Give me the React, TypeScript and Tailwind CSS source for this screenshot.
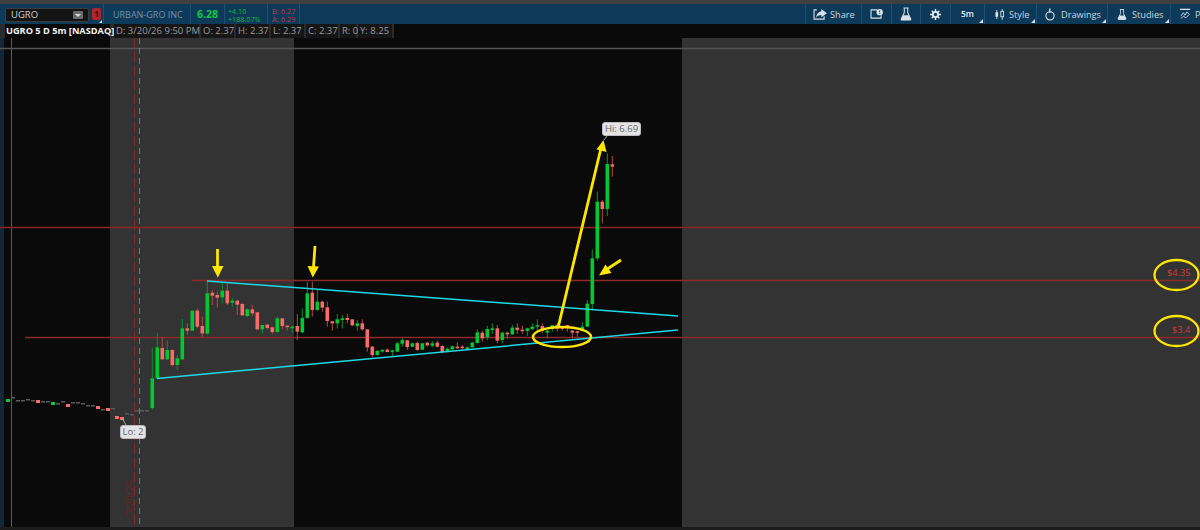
import React from 'react';

// candle = [wick top, wick bottom, body top, body bottom, 'g' | 'r'], in page px
type Candle = [number, number, number, number, 'g' | 'r'];

const CHART_TOP = 38;

// first stretch, values read off the crop at y offset 240
const sessionA: Candle[] = (
  [
    [325, 510, 415, 504, 'g'],
    [278, 415, 322, 415, 'g'],
    [292, 360, 324, 358, 'r'],
    [300, 360, 330, 358, 'g'],
    [328, 380, 330, 375, 'r'],
    [345, 390, 355, 375, 'g'],
    [237, 358, 265, 358, 'g'],
    [250, 285, 265, 272, 'r'],
    [212, 272, 212, 272, 'g'],
    [205, 265, 212, 260, 'r'],
    [230, 290, 258, 280, 'r'],
    [125, 283, 160, 281, 'g'],
    [150, 195, 158, 167, 'r'],
    [155, 203, 165, 173, 'r'],
    [128, 190, 152, 172, 'g'],
    [130, 195, 152, 190, 'r'],
    [175, 200, 182, 188, 'g'],
    [180, 225, 182, 194, 'r'],
    [190, 228, 192, 226, 'r'],
    [205, 232, 208, 228, 'g'],
    [195, 228, 208, 220, 'r'],
    [217, 270, 217, 268, 'r'],
    [255, 280, 255, 268, 'g'],
    [252, 268, 254, 264, 'r'],
    [260, 282, 262, 276, 'r'],
    [230, 278, 235, 276, 'g'],
    [235, 268, 235, 258, 'r'],
    [256, 272, 257, 261, 'r'],
    [258, 278, 260, 263, 'g'],
    [222, 300, 258, 275, 'r'],
    [205, 280, 234, 277, 'g'],
    [125, 235, 160, 234, 'g'],
    [125, 230, 158, 210, 'r'],
    [150, 212, 185, 210, 'g'],
    [182, 215, 185, 203, 'r'],
    [185, 260, 202, 243, 'r'],
    [243, 272, 244, 250, 'r'],
    [222, 265, 238, 250, 'g'],
    [225, 265, 235, 240, 'g'],
    [222, 250, 234, 240, 'r'],
    [238, 258, 238, 256, 'r'],
    [240, 272, 250, 258, 'g'],
    [238, 272, 250, 268, 'r'],
  ] as Candle[]
).map(([a, b, c, d, k]) => [240 + a / 3, 240 + b / 3, 240 + c / 3, 240 + d / 3, k] as Candle);

// second stretch, y offset 290
const sessionB: Candle[] = (
  [
    [118, 185, 118, 172, 'r'],
    [168, 202, 170, 195, 'r'],
    [180, 197, 183, 195, 'g'],
    [177, 188, 180, 184, 'g'],
    [175, 187, 179, 186, 'r'],
    [180, 198, 181, 184, 'g'],
    [155, 186, 160, 185, 'g'],
    [145, 170, 150, 161, 'g'],
    [150, 180, 151, 171, 'r'],
    [158, 172, 160, 170, 'g'],
    [155, 182, 159, 180, 'r'],
    [158, 180, 160, 179, 'g'],
    [156, 170, 158, 166, 'r'],
    [153, 172, 160, 167, 'g'],
    [152, 172, 158, 170, 'r'],
    [165, 190, 168, 186, 'r'],
    [172, 187, 176, 185, 'g'],
    [167, 180, 169, 178, 'g'],
    [157, 177, 170, 174, 'r'],
    [165, 177, 170, 174, 'r'],
    [170, 180, 172, 178, 'g'],
    [155, 172, 158, 172, 'g'],
    [118, 160, 127, 159, 'g'],
    [122, 155, 128, 145, 'r'],
    [108, 150, 117, 142, 'g'],
    [100, 132, 115, 120, 'g'],
    [105, 160, 115, 152, 'r'],
    [125, 160, 128, 150, 'g'],
    [125, 147, 128, 133, 'r'],
    [105, 135, 113, 133, 'g'],
    [100, 132, 113, 120, 'r'],
    [107, 132, 119, 122, 'r'],
    [113, 138, 115, 123, 'g'],
    [100, 120, 110, 117, 'g'],
    [88, 122, 106, 110, 'g'],
    [100, 130, 108, 122, 'r'],
    [120, 145, 122, 128, 'g'],
    [105, 125, 106, 116, 'g'],
    [100, 125, 104, 116, 'r'],
    [110, 122, 112, 116, 'r'],
    [105, 125, 105, 112, 'r'],
    [120, 146, 122, 128, 'r'],
    [122, 140, 124, 128, 'r'],
    [97, 125, 110, 122, 'g'],
    [30, 110, 41, 110, 'g'],
  ] as Candle[]
).map(([a, b, c, d, k]) => [290 + a / 3, 290 + b / 3, 290 + c / 3, 290 + d / 3, k] as Candle);

// the breakout, y offset 110
const sessionC: Candle[] = (
  [
    [418, 598, 445, 582, 'g'],
    [245, 452, 275, 445, 'g'],
    [270, 340, 275, 297, 'r'],
    [130, 318, 162, 297, 'g'],
    [138, 200, 163, 170, 'r'],
  ] as Candle[]
).map(([a, b, c, d, k]) => [110 + a / 3, 110 + b / 3, 110 + c / 3, 110 + d / 3, k] as Candle);

const candles = [...sessionA, ...sessionB, ...sessionC];

// overnight ticks: [x, y, kind]
const ticks: [number, number, string][] = [
  [8, 400, 'g'], [13, 398, 'n'], [18, 401, 'n'], [23, 401, 'n'], [28, 400, 'n'], [33, 401, 'n'],
  [38, 401, 'r'], [43, 402, 'n'], [48, 402, 'n'], [53, 403, 'g'], [58, 404, 'n'], [63, 402, 'n'],
  [68, 405, 'r'], [73, 403, 'n'], [78, 403, 'n'], [83, 404, 'n'], [88, 406, 'n'], [93, 406, 'n'],
  [98, 407, 'r'], [103, 410, 'n'], [108, 409, 'r'], [113, 409, 'n'], [117, 417, 'r'], [122, 418, 'r'],
  [127, 414, 'n'], [132, 415, 'n'], [137, 411, 'n'], [142, 411, 'n'], [147, 411, 'n'],
];

const Divider = () => <div className="h-full w-px shrink-0 bg-[#1d4f72]" />;

const Corner = () => (
  <svg width="4" height="4" viewBox="0 0 4 4" className="absolute bottom-[1px] right-[1px]">
    <path d="M4 0v4H0z" fill="#d8e2ea" />
  </svg>
);

const FlaskIcon = ({ className }: { className?: string }) => (
  <svg viewBox="0 0 14 16" className={className}>
    <path d="M4 1h6M5 1.500v5L1.500 13.500a1 1 0 0 0 1 1.500h9a1 1 0 0 0 1-1.500L9 6.500v-5" fill="none" stroke="#d8e2ea" strokeWidth="1.200" />
    <path d="M3.800 9.500h6.400l2.300 4.500a.7.7 0 0 1-.7 1H2.200a.7.7 0 0 1-.7-1z" fill="#d8e2ea" />
  </svg>
);

function Toolbar() {
  return (
    <div className="flex h-[20px] items-stretch whitespace-nowrap bg-[#0e3a5a] pl-[5px] text-[#c9d6df]">
      <div className="mt-[4px] flex h-[14px] w-[84px] items-center justify-between rounded-[2px] border border-[#3c3c3c] bg-[#141414] pl-[5px] pr-[5px] text-[9.500px] text-[#cfcfcf]">
        <span>UGRO</span>
        <span className="flex h-[8px] w-[10px] items-center justify-center rounded-[1px] bg-[#6a6a6a]">
          <svg width="6" height="3" viewBox="0 0 6 3"><path d="M0 0h6L3 3z" fill="#ddd" /></svg>
        </span>
      </div>
      <div className="relative ml-[3px] mt-[4px] flex h-[12px] w-[9px] items-center justify-center rounded-[2px] bg-[#b3232b] text-[9px] font-bold text-[#1c1c1c]">
        1
        <svg width="3" height="3" viewBox="0 0 3 3" className="absolute -bottom-[3px] -right-[1px]">
          <path d="M3 0v3H0z" fill="#d8e2ea" />
        </svg>
      </div>
      <div className="ml-[2px] h-full w-px bg-[#1d4f72]" />
      <div className="flex w-[86px] items-center pl-[9px] pt-[1px] text-[9px] text-[#6f93ab]">URBAN-GRO INC</div>
      <Divider />
      <div className="flex w-[33px] items-center pl-[6px] pt-[1px] text-[10.500px] font-bold leading-none text-[#14c943]">6.28</div>
      <Divider />
      <div className="flex w-[42px] flex-col justify-center pl-[3px] pt-[1px] text-[7.200px] leading-[8px] text-[#10b83c]">
        <span>+4.10</span>
        <span>+188.07%</span>
      </div>
      <Divider />
      <div className="flex w-[31px] flex-col justify-center pl-[4px] pt-[1px] text-[7.500px] leading-[8px] text-[#b8394b]">
        <span>B: 6.27</span>
        <span>A: 6.29</span>
      </div>
      <Divider />

      <div className="ml-auto flex items-stretch text-[9.200px]">
        <Divider />
        <div className="flex w-[55px] items-center gap-[3px] pl-[7px]">
          <svg width="14" height="11" viewBox="0 0 15 12">
            <path d="M4 1H1v10h11V8" fill="none" stroke="#d8e2ea" strokeWidth="1.200" />
            <path d="M9 0l6 4.500L9 9V6.500c-3 0-4.500 1-6 3 .5-3.500 2.500-6.500 6-7z" fill="#d8e2ea" />
          </svg>
          <span className="pt-[1px]">Share</span>
        </div>
        <Divider />
        <div className="flex w-[29px] items-center justify-center">
          <svg width="13" height="10" viewBox="0 0 14 11">
            <path d="M8 1H1v9h11V7" fill="none" stroke="#d8e2ea" strokeWidth="1.200" />
            <circle cx="10.500" cy="3.500" r="3.500" fill="#d8e2ea" />
            <path d="M10.500 1.500v2.200M10.500 4.500v.8" stroke="#0e3a5a" strokeWidth="1" />
          </svg>
        </div>
        <Divider />
        <div className="flex w-[28px] items-center justify-center">
          <FlaskIcon className="h-[14px] w-[12px]" />
        </div>
        <Divider />
        <div className="flex w-[29px] items-center justify-center">
          <svg width="11" height="11" viewBox="0 0 12 12">
            <g stroke="#e6edf2" strokeWidth="1.500">
              <path d="M6 0v12M0 6h12M1.800 1.800l8.400 8.400M10.200 1.800l-8.400 8.400" />
            </g>
            <circle cx="6" cy="6" r="3.800" fill="#e6edf2" />
            <circle cx="6" cy="6" r="1.800" fill="#0e3a5a" />
          </svg>
        </div>
        <Divider />
        <div className="relative flex w-[33px] items-center justify-center pt-[1px] text-[8.500px] font-semibold text-[#e6edf2]">
          5m
          <Corner />
        </div>
        <Divider />
        <div className="relative flex w-[51px] items-center gap-[5px] pl-[10px]">
          <svg width="9" height="11" viewBox="0 0 10 12">
            <path d="M2 1v10M8 0v12" stroke="#d8e2ea" strokeWidth="1" />
            <rect x="0.500" y="3.500" width="3" height="5" fill="#d8e2ea" />
            <rect x="6.500" y="2.500" width="3" height="6" fill="#0e3a5a" stroke="#d8e2ea" />
          </svg>
          <span className="pt-[1px]">Style</span>
          <Corner />
        </div>
        <Divider />
        <div className="relative flex w-[70px] items-center gap-[6px] pl-[8px]">
          <svg width="10" height="13" viewBox="0 0 11 14">
            <circle cx="5.500" cy="8.500" r="4.500" fill="none" stroke="#d8e2ea" strokeWidth="1.200" />
            <path d="M4.500 0.500h1.500v4.500H4.500z" fill="#d8e2ea" />
          </svg>
          <span className="pt-[1px]">Drawings</span>
          <Corner />
        </div>
        <Divider />
        <div className="relative flex w-[62px] items-center gap-[5px] pl-[9px]">
          <FlaskIcon className="h-[13px] w-[10px]" />
          <span className="pt-[1px]">Studies</span>
          <Corner />
        </div>
        <Divider />
        <div className="flex w-[29px] items-center gap-[4px] pl-[9px]">
          <svg width="11" height="12" viewBox="0 0 13 13" className="shrink-0">
            <path d="M0 1h12" stroke="#d8e2ea" strokeWidth="1.500" />
            <path d="M1 9l3-4 2 3 2-4 3 3M1 12l3-3 3 2 4-4" fill="none" stroke="#d8e2ea" strokeWidth="1" />
          </svg>
          <span className="pt-[1px]">P</span>
        </div>
      </div>
    </div>
  );
}

function InfoRow() {
  const cells = [
    { text: 'D: 3/20/26 9:50 PM', w: 'w-[85px]' },
    { text: 'O: 2.37', w: 'w-[33px]' },
    { text: 'H: 2.37', w: 'w-[33px]' },
    { text: 'L: 2.37', w: 'w-[33px]' },
    { text: 'C: 2.37', w: 'w-[32px]' },
    { text: 'R: 0', w: 'w-[16px]' },
    { text: 'Y: 8.25', w: 'w-[34px]' },
  ];
  return (
    <div className="flex h-[14px] items-stretch gap-[2px] bg-[#2b2b2b] pl-[5px] text-[9.500px] leading-[14px]">
      <div className="mr-[2px] w-[105px] whitespace-nowrap bg-[#0a0a0a] pl-[1px] text-[9.200px] font-bold text-[#f2f2f2]">UGRO 5 D 5m [NASDAQ]</div>
      {cells.map((c) => (
        <div key={c.text} className={`${c.w} whitespace-nowrap bg-[#161616] pl-[2px] text-[#9a9a9a]`}>
          {c.text}
        </div>
      ))}
      <div className="flex-1 bg-[#0a0a0a]" />
    </div>
  );
}

function ChartDrawing() {
  return (
    <svg viewBox={`0 ${CHART_TOP} 1200 489`} className="absolute inset-0 h-full w-full">
      <path d="M0 48.500h1200" stroke="#555" strokeWidth="1.500" />
      <path d="M11.500 38v489" stroke="#5a5a5a" strokeWidth="1" />
      <path d="M139.500 38v489" stroke="#777" strokeWidth="1" strokeDasharray="6 4" />
      <path d="M134.500 38v489" stroke="#7a2b2b" strokeWidth="1" strokeDasharray="10 4" />

      {/* price levels */}
      <path d="M0 227.500h1200" stroke="#8c2626" strokeWidth="1.400" />
      <path d="M192 280.500h1008" stroke="#8c2a2a" strokeWidth="1.400" />
      <path d="M25 337.500h1175" stroke="#8c2a2a" strokeWidth="1.400" />

      {ticks.map(([x, y, k]) => (
        <rect
          key={x}
          x={x - 2}
          y={y - 1}
          width={4}
          height={k === 'n' ? 1.500 : 3}
          fill={k === 'g' ? '#11c73e' : k === 'r' ? '#ff6a6a' : '#5a5a5a'}
        />
      ))}

      {candles.map(([wt, wb, bt, bb, k], i) => {
        const x = 152.300 + i * 5;
        return (
          <g key={i}>
            <rect x={x - 0.500} y={wt} width={1} height={wb - wt} fill={k === 'g' ? '#0b8f2e' : '#b34747'} />
            <rect x={x - 1.800} y={bt} width={3.600} height={Math.max(bb - bt, 1.500)} fill={k === 'g' ? '#02c931' : '#f96b6b'} />
          </g>
        );
      })}

      {/* trend lines */}
      <path d="M207 281L678 316M157 378.500L678 330" stroke="#1fd9e6" strokeWidth="1.500" fill="none" />

      {/* annotations */}
      <g stroke="#ffe600" fill="none">
        <ellipse cx="562" cy="337" rx="29" ry="10" strokeWidth="2.500" />
        <ellipse cx="1176.500" cy="275" rx="22" ry="15" strokeWidth="2.300" />
        <ellipse cx="1176.500" cy="331" rx="22" ry="15" strokeWidth="2.300" />
        <path d="M217.500 249v20" strokeWidth="2.800" />
        <path d="M315 246l-1.500 21" strokeWidth="2.800" />
        <path d="M558 328L601 148" strokeWidth="2.800" />
        <path d="M621 260l-16 10.500" strokeWidth="2.800" />
      </g>
      <g fill="#ffe600">
        <path d="M212 266h11.500l-5.700 11.500z" />
        <path d="M307.500 266l11.500.5-6.200 11z" />
        <path d="M603.500 140l-7 9.500 10 2.500z" />
        <path d="M599 275.500l6.500-11 6 8.500z" />
      </g>

      {/* label pointers */}
      <path d="M607 136l-3 4" stroke="#999" strokeWidth="1" />
      <path d="M122 418l4 7" stroke="#aaa" strokeWidth="1" />
    </svg>
  );
}

export default function App() {
  return (
    <div className="h-[530px] w-[1200px] overflow-hidden bg-[#1c1c1c] font-['Open_Sans',sans-serif]">
      <div className="h-[4px] bg-[#3f3f3f]" />
      <Toolbar />
      <InfoRow />
      <div className="relative flex h-[489px] bg-[#0a0a0a]">
        <div className="w-[4px] bg-[#12283a]" />
        <div className="w-[106px] bg-[#0a0a0a]" />
        <div className="w-[184px] bg-[#333333]" />
        <div className="w-[388px] bg-[#0a0a0a]" />
        <div className="flex-1 bg-[#333333]" />
        <ChartDrawing />

        {/* labels sitting on the chart */}
        <div className="absolute left-[602px] top-[84px] flex h-[14px] w-[39px] items-center justify-center rounded-[3px] border border-[#bdbdbd] bg-[#e4e4e4] text-[9.500px] text-[#666]">
          Hi: 6.69
        </div>
        <div className="absolute left-[120px] top-[387px] flex h-[14px] w-[26px] items-center justify-center rounded-[3px] border border-[#bdbdbd] bg-[#e4e4e4] text-[9.500px] text-[#666]">
          Lo: 2
        </div>
        <div className="absolute left-[1167px] top-[228px] text-[9.200px] font-medium leading-[14px] text-[#d03a3a]">$4.35</div>
        <div className="absolute left-[1172px] top-[285px] text-[9.200px] font-medium leading-[14px] text-[#d03a3a]">$3.4</div>
        <div className="absolute left-[108px] top-[453px] w-[44px] -rotate-90 text-center text-[9.500px] leading-[14px] text-[#6e2626]">3/20/26</div>
      </div>
    </div>
  );
}
